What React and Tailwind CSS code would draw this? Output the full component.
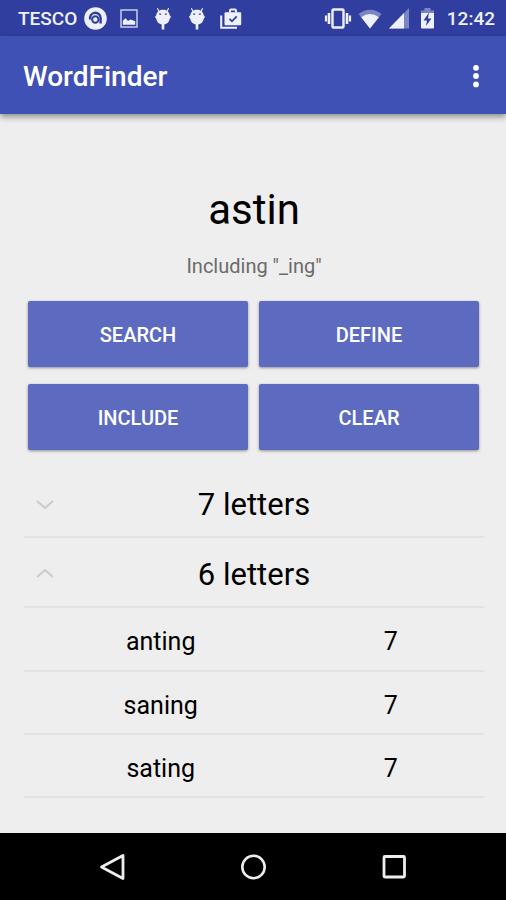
import { useState } from "react";

const initialGroups = [
  { length: 7, words: [] },
  {
    length: 6,
    words: [
      { word: "anting", score: 7 },
      { word: "saning", score: 7 },
      { word: "sating", score: 7 },
    ],
  },
];

const actions = ["Search", "Define", "Include", "Clear"];

function DroidIcon() {
  return (
    <svg width="18" height="24" viewBox="0 0 18 24" fill="currentColor" aria-hidden="true">
      <path d="M3.500 1.500l1.500 3M14.500 1.500l-1.500 3" stroke="currentColor" strokeWidth="1.100" strokeLinecap="round" />
      <path d="M2.200 8.500C2.700 4.800 5.500 2.800 9 2.800s6.300 2 6.800 5.700c1.300.2 1.500 2.500 0 3-.4 3.500-2.800 5.500-5.500 6V22.500H7.700V17.500C5 17 2.600 15 2.200 11.500c-1.500-.5-1.300-2.800 0-3z" />
      <path d="M5.200 7.200h2M10.800 7.200h2" stroke="#303f9f" strokeWidth="1.300" />
    </svg>
  );
}

function StatusBar() {
  return (
    <div className="flex h-9 items-center justify-between bg-[#303f9f] pt-px pr-[11px] pl-[18px] text-[19px] leading-6 font-medium text-[#eef0fb]">
      <div className="flex items-center">
        <span>TESCO</span>
        <svg className="ml-[7px]" width="23" height="23" viewBox="0 0 23 23" aria-hidden="true">
          <circle cx="11.500" cy="11.500" r="11.300" fill="currentColor" />
          <path
            d="M6.200 12.500A5.300 5.300 0 1 1 16.600 11V16.500"
            fill="none"
            stroke="#303f9f"
            strokeWidth="2.400"
          />
          <circle cx="11.300" cy="12.500" r="3.200" fill="none" stroke="#303f9f" strokeWidth="2" />
        </svg>
        <svg className="ml-[13px]" width="18" height="19" viewBox="0 0 18 19" aria-hidden="true">
          <rect x="1" y="1" width="16" height="17" fill="none" stroke="currentColor" strokeWidth="1.500" opacity="0.8" />
          <path d="M2.800 15.800v-4l2.700-2.500 2.500 2.700 2.500-1.500 4.700 1.800v3.500z" fill="currentColor" />
        </svg>
        <span className="ml-4 flex gap-4">
          <DroidIcon />
          <DroidIcon />
        </span>
        <svg className="ml-[14px]" width="22" height="22" viewBox="0 0 22 22" aria-hidden="true">
          <path d="M1.200 7.500v12.300H17" fill="none" stroke="currentColor" strokeWidth="2" />
          <path d="M10 4.500V2.500Q10 1.500 11 1.500h4q1 0 1 1v2" fill="none" stroke="currentColor" strokeWidth="2" />
          <path d="M5.500 4.200h14.700q1 0 1 1v11q0 1-1 1H5.500q-1 0-1-1v-11q0-1 1-1z" fill="currentColor" />
          <path d="M9.500 10.800l2.500 2.500 4.700-5" fill="none" stroke="#303f9f" strokeWidth="1.700" />
        </svg>
      </div>
      <div className="flex items-center">
        <svg width="28" height="21" viewBox="0 0 28 21" fill="none" stroke="currentColor" aria-hidden="true">
          <rect x="8.500" y="1.500" width="11" height="18" rx="1" strokeWidth="2.400" />
          <path d="M5 5v11M23 5v11" strokeWidth="2.600" />
          <path d="M2 7.500v6M26 7.500v6" strokeWidth="2.200" />
        </svg>
        <svg className="ml-[6px]" width="24" height="20" viewBox="0 0 24 20" fill="currentColor" aria-hidden="true">
          <path d="M.5 5Q12-3.500 23.500 5L12 19.500z" opacity="0.4" />
          <path d="M3.200 8.300Q12 1.500 20.800 8.300L12 19.500z" />
        </svg>
        <svg className="ml-[6px]" width="22" height="21" viewBox="0 0 22 21" fill="currentColor" aria-hidden="true">
          <path d="M21 0v20.500H1z" opacity="0.4" />
          <path d="M16 5v15.500H1z" />
        </svg>
        <svg className="ml-[10px]" width="15" height="21" viewBox="0 0 15 21" fill="currentColor" aria-hidden="true">
          <path d="M4.500 0h6v2.500H14V6H1V2.500h3.500z" opacity="0.4" />
          <path d="M1 5h13v14.500q0 1-1 1H2q-1 0-1-1z" />
          <path d="M9 4.500L3.500 12.500H7L6 18l5.500-7.500H8z" fill="#303f9f" />
        </svg>
        <span className="ml-3">12:42</span>
      </div>
    </div>
  );
}

function AppBar() {
  return (
    <header className="z-10 flex h-[78px] items-center justify-between bg-[#3f51b5] pt-[3px] pr-[18px] pl-[23px] text-white shadow-[0_3px_6px_rgba(0,0,0,0.4)]">
      <h1 className="text-[28px] leading-8 font-medium">WordFinder</h1>
      <button type="button" aria-label="More options" className="flex h-12 w-6 items-center justify-center">
        <svg width="8" height="24" viewBox="0 0 8 24" fill="currentColor" aria-hidden="true">
          <circle cx="4" cy="2.800" r="2.900" />
          <circle cx="4" cy="11" r="2.900" />
          <circle cx="4" cy="19.400" r="2.900" />
        </svg>
      </button>
    </header>
  );
}

function WordGroup({ group, open, onToggle }) {
  return (
    <section>
      <button
        type="button"
        aria-expanded={open}
        onClick={onToggle}
        className="grid h-[70px] w-full grid-cols-[42px_1fr_42px] items-center border-b-2 border-[#e2e2e2] pt-[6px]"
      >
        <svg
          className="justify-self-center"
          width="18"
          height="12"
          viewBox="0 0 18 12"
          fill="none"
          stroke="#cbcbcb"
          strokeWidth="2"
          aria-hidden="true"
        >
          <path d={open ? "M1 8l8-7 8 7" : "M1 2l8 7 8-7"} />
        </svg>
        <span className="text-[31px] leading-10">{group.length} letters</span>
      </button>

      {open && (
        <table className="w-full table-fixed text-center text-[25px] leading-8">
          <tbody>
            {group.words.map((item) => (
              <tr key={item.word} className="h-[63px] border-b-2 border-[#e2e2e2]">
                <td className="w-[59%] pt-[6px] pl-[2px]">{item.word}</td>
                <td className="pt-[6px] pl-[2px]">{item.score}</td>
              </tr>
            ))}
          </tbody>
        </table>
      )}
    </section>
  );
}

function NavBar() {
  return (
    <nav className="flex h-[67px] items-center justify-center gap-[93px] bg-black text-[#eeeeee]">
      <button type="button" aria-label="Back" className="flex size-12 items-center justify-center">
        <svg width="28" height="28" viewBox="0 0 28 28" fill="none" stroke="currentColor" strokeWidth="2.800" strokeLinejoin="round" aria-hidden="true">
          <path d="M25 2.500v23L3.500 14z" />
        </svg>
      </button>
      <button type="button" aria-label="Home" className="flex size-12 items-center justify-center">
        <svg width="28" height="28" viewBox="0 0 28 28" fill="none" stroke="currentColor" strokeWidth="2.600" aria-hidden="true">
          <circle cx="14.500" cy="14" r="11.200" />
        </svg>
      </button>
      <button type="button" aria-label="Recent apps" className="flex size-12 items-center justify-center">
        <svg width="28" height="28" viewBox="0 0 28 28" fill="none" stroke="currentColor" strokeWidth="2.800" aria-hidden="true">
          <rect x="4" y="3.500" width="20.500" height="20.500" rx="1" />
        </svg>
      </button>
    </nav>
  );
}

function App() {
  const [openGroups, setOpenGroups] = useState([6]);

  const toggleGroup = (length) => {
    setOpenGroups((current) =>
      current.includes(length)
        ? current.filter((item) => item !== length)
        : [...current, length]
    );
  };

  return (
    <div className="flex min-h-screen flex-col bg-[#eeeeee] font-[Roboto,sans-serif] text-black">
      <StatusBar />
      <AppBar />

      <main className="flex-1 pt-[68px] pr-[22px] pl-6">
        <p className="text-center text-[42px] leading-14">astin</p>
        <p className="mt-4 text-center text-[20px] leading-6 text-[#6b6b6b]">
          Including "_ing"
        </p>

        <div className="mt-[23px] grid grid-cols-2 gap-x-[11px] gap-y-[17px] pr-[5px] pl-1">
          {actions.map((action) => (
            <button
              key={action}
              type="button"
              className="h-[66px] rounded-xs bg-[#5c6bc0] pt-[2px] text-[20px] leading-6 font-medium text-white uppercase shadow-[0_1px_3px_rgba(0,0,0,0.4)]"
            >
              {action}
            </button>
          ))}
        </div>

        <div className="mt-[18px]">
          {initialGroups.map((group) => (
            <WordGroup
              key={group.length}
              group={group}
              open={openGroups.includes(group.length)}
              onToggle={() => toggleGroup(group.length)}
            />
          ))}
        </div>
      </main>

      <NavBar />
    </div>
  );
}

export default App;
